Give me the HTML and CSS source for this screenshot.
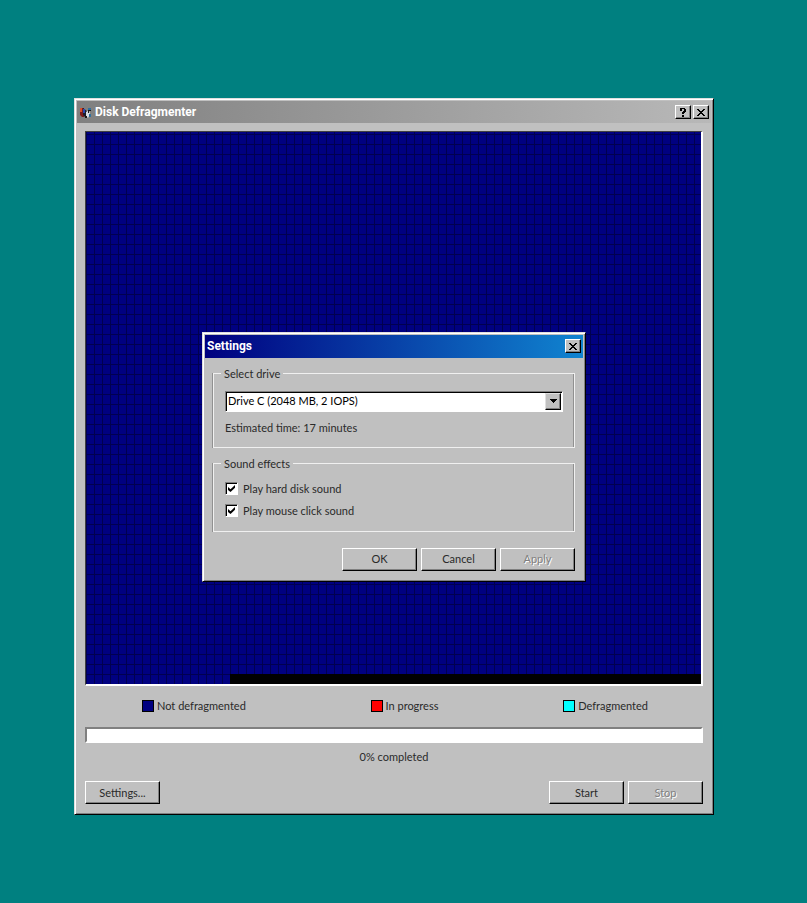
FILE: index.html
```html
<!DOCTYPE html>
<html lang="en">
<head>
<meta charset="utf-8">
<meta name="viewport" content="width=device-width, initial-scale=1">
<title>Disk Defragmenter</title>
<link rel="stylesheet" href="styles.css">
</head>
<body>
<main class="window">
  <header class="titlebar titlebar-inactive">
    <svg class="app-icon" viewBox="0 0 14 13" aria-hidden="true">
      <path fill="#7a1c1c" d="M1 2h4v9H3L1 9z"/>
      <path fill="#d8502c" d="M1 2h2v4H1z"/>
      <path fill="#1c1c28" d="M4 2l5 4-2 6-3-3z"/>
      <path fill="#2848b0" d="M4 3h2v4H4z"/>
      <path fill="#d8dce4" d="M7 6l3-2 1 4-2 4-2-2z"/>
      <path fill="#30709c" d="M9 2h3v2H9zM10 8h2v3h-2z"/>
      <path fill="#181818" d="M9 4h3v1h-2v2H9zM6 10h2v2H6z"/>
    </svg>
    <h1 class="title">Disk Defragmenter</h1>
    <button class="tool" type="button" aria-label="Help">
      <svg viewBox="0 0 8 9" aria-hidden="true"><path d="M1 0h5v1h1v3H6v1H5v1H3V4h1V3h1V1H3v2H1zM3 7h2v2H3z"/></svg>
    </button>
    <button class="tool" type="button" aria-label="Close">
      <svg viewBox="0 0 8 9" aria-hidden="true"><path d="M0 1h2v1h1v1h2V2h1V1h2v1H7v1H6v1H5v1h1v1h1v1h1v1H6V7H5V6H3v1H2v1H0V7h1V6h1V5h1V4H2V3H1V2H0z"/></svg>
    </button>
  </header>
  <div class="content">
    <div class="disk-map" role="img" aria-label="Disk clusters"><div class="unused"></div></div>
    <ul class="key">
      <li><span class="swatch pending"></span>Not defragmented</li>
      <li><span class="swatch active"></span>In progress</li>
      <li><span class="swatch done"></span>Defragmented</li>
    </ul>
    <progress class="bar" id="progress" max="100" value="0"></progress>
    <label class="status" for="progress">0% completed</label>
    <div class="actions">
      <button class="btn push" type="button">Settings...</button>
      <button class="btn" type="button">Start</button>
      <button class="btn" type="button" disabled>Stop</button>
    </div>
  </div>

  <div class="overlay">
    <section class="dialog" role="dialog" aria-labelledby="dialog-title">
      <header class="titlebar titlebar-active">
        <h2 class="title" id="dialog-title">Settings</h2>
        <button class="tool" type="button" aria-label="Close">
          <svg viewBox="0 0 8 9" aria-hidden="true"><path d="M0 1h2v1h1v1h2V2h1V1h2v1H7v1H6v1H5v1h1v1h1v1h1v1H6V7H5V6H3v1H2v1H0V7h1V6h1V5h1V4H2V3H1V2H0z"/></svg>
        </button>
      </header>
      <form class="dialog-body">
        <fieldset class="group">
          <legend>Select drive</legend>
          <div class="select-box">
            <select aria-label="Select drive"><option>Drive C (2048 MB, 2 IOPS)</option></select>
            <span class="arrow"><svg viewBox="0 0 7 4" aria-hidden="true"><path d="M0 0h7v1H6v1H5v1H4v1H3V3H2V2H1V1H0z"/></svg></span>
          </div>
          <p class="estimate">Estimated time: 17 minutes</p>
        </fieldset>
        <fieldset class="group checks">
          <legend>Sound effects</legend>
          <label class="check"><input type="checkbox" checked>Play hard disk sound</label>
          <label class="check"><input type="checkbox" checked>Play mouse click sound</label>
        </fieldset>
        <div class="actions">
          <button class="btn" type="button">OK</button>
          <button class="btn" type="button">Cancel</button>
          <button class="btn" type="button" disabled>Apply</button>
        </div>
      </form>
    </section>
  </div>
</main>
</body>
</html>
```
FILE: styles.css
```css
* { box-sizing: border-box; }

body {
  margin: 0;
  min-height: 100vh;
  display: flex;
  padding: 98px 93px 88px 74px;
  background: #008080;
  color: #2a2a2a;
  font: 11px/14px Lato, "Liberation Sans", sans-serif;
}

h1, h2, p, ul { margin: 0; padding: 0; }

.window, .dialog {
  display: flex;
  flex-direction: column;
  padding: 2px;
  background: #c0c0c0;
  border: 1px solid;
  border-color: #dfdfdf #000 #000 #dfdfdf;
  box-shadow: inset 1px 1px #fff, inset -1px -1px #808080;
}

.window {
  position: relative;
  flex: 1;
}

.titlebar {
  display: flex;
  align-items: center;
  gap: 2px;
  height: 22px;
  padding: 0 2px;
  color: #fff;
}

.titlebar-inactive { background: linear-gradient(90deg, #808080, #b8b8b8); }

.titlebar-active {
  height: 23px;
  background: linear-gradient(90deg, #000080, #1084d0);
}

.title {
  flex: 1;
  font: bold 12px/14px Roboto, sans-serif;
}

.app-icon { width: 14px; height: 13px; }

.tool, .btn {
  padding: 0;
  color: inherit;
  font: inherit;
  background: #c0c0c0;
  border: 1px solid;
  border-color: #fff #000 #000 #fff;
  box-shadow: inset -1px -1px #808080;
}

.tool {
  display: grid;
  place-items: center;
  width: 16px;
  height: 14px;
}

.tool svg { width: 8px; height: 9px; }

.content {
  flex: 1;
  display: flex;
  flex-direction: column;
  padding: 8px;
}

.disk-map {
  flex: 1;
  display: flex;
  align-items: flex-end;
  border: 1px solid;
  border-color: #404040 #fff #fff #404040;
  border-right-width: 2px;
  border-bottom-width: 2px;
  background-color: #000080;
  background-image:
    linear-gradient(#000050 1px, transparent 1px),
    linear-gradient(90deg, #000050 1px, transparent 1px);
  background-size: 8px 10px;
  background-position: left bottom;
}

.unused {
  flex: 1;
  height: 10px;
  margin-left: 144px;
  background: #000;
}

.key {
  display: flex;
  justify-content: space-between;
  padding: 13px 55px 14px 57px;
  list-style: none;
}

.key li {
  display: flex;
  align-items: center;
  gap: 3px;
}

.swatch {
  width: 12px;
  height: 12px;
  border: 1px solid #000;
}

.pending { background: #000080; }
.active { background: #f00; }
.done { background: #0ff; }

.bar {
  appearance: none;
  display: block;
  width: 100%;
  height: 16px;
  border: 2px solid;
  border-color: #808080 #fff #fff #808080;
  background: #fff;
}

.bar::-webkit-progress-bar { background: #fff; }
.bar::-webkit-progress-value { background: #000080; }

.status {
  padding: 7px 0 17px;
  text-align: center;
}

.actions {
  display: flex;
  justify-content: flex-end;
  gap: 4px;
}

.btn {
  width: 75px;
  height: 23px;
}

.push { margin-right: auto; }

.btn:disabled {
  color: #808080;
  text-shadow: 1px 1px #fff;
}

.overlay {
  position: absolute;
  inset: 0;
  display: grid;
  place-items: center;
}

.dialog {
  width: 384px;
}

.dialog-body {
  padding: 9px 8px 8px;
}

.group {
  min-width: 0;
  margin: 0 0 9px;
  padding: 10px 11px;
  border: 1px solid #f0f0f0;
  box-shadow: -1px 0 #909090, inset -1px 0 #909090;
}

.checks {
  margin-bottom: 16px;
  padding-top: 7px;
  padding-bottom: 9px;
}

.group legend {
  margin-left: -4px;
  padding: 0 3px;
}

.select-box {
  display: flex;
  height: 21px;
  padding: 1px;
  background: #fff;
  border: 1px solid;
  border-color: #808080 #fff #fff #808080;
  box-shadow: inset 1px 1px #000;
}

.select-box select {
  appearance: none;
  flex: 1;
  min-width: 0;
  margin-right: -16px;
  padding: 0 18px 0 1px;
  border: 0;
  background: transparent;
  color: #000;
  font: inherit;
}

.arrow {
  display: grid;
  place-items: center;
  width: 16px;
  background: #c0c0c0;
  border: 1px solid;
  border-color: #dfdfdf #000 #000 #dfdfdf;
  box-shadow: inset -1px -1px #808080;
  pointer-events: none;
}

.arrow svg { width: 7px; height: 4px; }

.estimate { padding: 9px 0 2px; }

.check {
  display: flex;
  align-items: center;
  gap: 5px;
  height: 22px;
}

.check input {
  appearance: none;
  display: grid;
  place-items: center;
  width: 13px;
  height: 13px;
  margin: 0;
  background: #fff;
  border: 1px solid;
  border-color: #808080 #fff #fff #808080;
  box-shadow: inset 1px 1px #000;
}

.check input:checked::before {
  content: "";
  width: 7px;
  height: 7px;
  background: #000;
  clip-path: polygon(0 29%, 36% 60%, 100% 0, 100% 40%, 36% 100%, 0 70%);
}
```
